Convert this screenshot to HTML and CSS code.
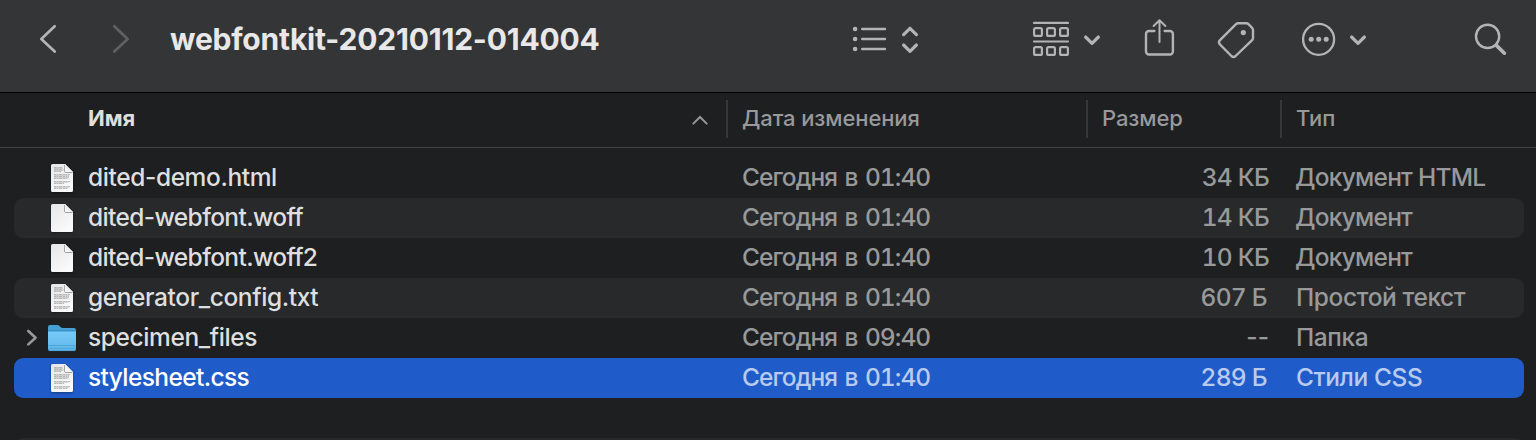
FILE: index.html
```html
<!DOCTYPE html>
<html lang="ru">
<head>
<meta charset="utf-8">
<title>webfontkit-20210112-014004</title>
<link rel="stylesheet" href="styles.css">
</head>
<body>
<svg class="defs" width="0" height="0" aria-hidden="true">
  <defs>
    <linearGradient id="paper" x1="0" y1="0" x2="0.6" y2="1"><stop offset="0" stop-color="#e6e6e6"/><stop offset="1" stop-color="#fafafa"/></linearGradient>
    <linearGradient id="fold" x1="0" y1="1" x2="0.7" y2="0.3"><stop offset="0" stop-color="#ffffff"/><stop offset="1" stop-color="#e8e8e8"/></linearGradient>
    <linearGradient id="folder" x1="0" y1="0" x2="0" y2="1"><stop offset="0" stop-color="#76cbf8"/><stop offset="1" stop-color="#5fb5e8"/></linearGradient>
    <symbol id="doc" viewBox="0 0 24 30">
      <path d="M2.500 1H15l8 8v18.500a1.500 1.500 0 0 1-1.500 1.500h-19A1.500 1.500 0 0 1 1 27.500v-25A1.500 1.500 0 0 1 2.500 1z" fill="url(#paper)"/>
      <path d="M14.600 2v6.200a1.300 1.300 0 0 0 1.300 1.300h6.500" fill="none" stroke="#8c8c8c" stroke-width="1" opacity=".8"/>
      <path d="M15 1l8 8h-6.800A1.200 1.200 0 0 1 15 7.800z" fill="url(#fold)"/>
    </symbol>
    <symbol id="lines" viewBox="0 0 24 30">
      <g stroke="#888" stroke-width="1" fill="none" opacity=".55" stroke-dasharray="2.600 .5 1.400 .4 3.200 .6">
        <path d="M4 4.500h9M4 6.500h9.500M4 8.500h7M4 11.500h16M4 13.500h15M4 15.500h14M4 18.500h16M4 20.500h10M4 23.500h16M4 25.500h14"/>
      </g>
      <g stroke="#999" stroke-width="1" fill="none" opacity=".38">
        <path d="M4 5.500h9M4 7.500h9M4 12.500h15M4 14.500h15M4 19.500h14M4 24.500h15"/>
      </g>
    </symbol>
  </defs>
</svg>

<header class="toolbar">
  <svg class="icon back" width="24" height="92" viewBox="36 0 24 92"><path d="M54.700 26.300L41.300 39l13.400 12.500"/></svg>
  <svg class="icon forward" width="24" height="92" viewBox="109 0 24 92"><path d="M114.300 26.300L127.700 39l-13.400 12.500"/></svg>
  <h1 class="title">webfontkit-20210112-014004</h1>
  <svg class="icon view" width="80" height="92" viewBox="845 0 80 92">
    <path d="M862.200 29h22.800M862.200 39h22.800M862.200 49h22.800" stroke-width="2.400"/>
    <g class="solid"><circle cx="855.100" cy="29" r="2.300"/><circle cx="855.100" cy="39" r="2.300"/><circle cx="855.100" cy="49" r="2.300"/></g>
    <path d="M903.600 34.600l6.400-6.300 6.400 6.300M903.600 45l6.400 6.300 6.400-6.300" stroke-width="3.200"/>
  </svg>
  <svg class="icon group" width="80" height="92" viewBox="1025 0 80 92">
    <path d="M1034 22.900h34M1034 41.500h34" stroke-width="2.200"/>
    <g stroke-width="2.200"><rect x="1034.100" y="28.100" width="7.800" height="7.800" rx="1.500"/><rect x="1047.100" y="28.100" width="7.800" height="7.800" rx="1.500"/><rect x="1060.100" y="28.100" width="7.800" height="7.800" rx="1.500"/><rect x="1034.100" y="47.100" width="7.800" height="7.800" rx="1.500"/><rect x="1047.100" y="47.100" width="7.800" height="7.800" rx="1.500"/><rect x="1060.100" y="47.100" width="7.800" height="7.800" rx="1.500"/></g>
    <path d="M1085.600 37l6.400 6.300 6.400-6.300" stroke-width="3.200"/>
  </svg>
  <svg class="icon share" width="40" height="92" viewBox="1140 0 40 92">
    <path d="M1154.300 31h-5.300a3 3 0 0 0-3 3v17.500a3 3 0 0 0 3 3h20.900a3 3 0 0 0 3-3V34a3 3 0 0 0-3-3h-5.200"/>
    <path d="M1159.500 42V20.300M1153.600 26l5.900-5.800 5.900 5.800" stroke-width="2"/>
  </svg>
  <svg class="icon tag" width="48" height="92" viewBox="1212 0 48 92">
    <path d="M1220 40.200L1236 24.200q1-.9 2.300-.9h8q1.300 0 2.200.9l3.600 3.600q.9.900.9 2.200v8q0 1.300-.9 2.200L1235.600 56q-2.100 1.900-4.200 0l-11.400-11.500q-2.100-2.200 0-4.300z"/>
    <circle class="solid" cx="1243.300" cy="32.600" r="2.600"/>
  </svg>
  <svg class="icon more" width="76" height="92" viewBox="1295 0 76 92">
    <circle cx="1318.600" cy="39.300" r="15.500" stroke-width="2.300"/>
    <g class="solid"><circle cx="1311.200" cy="39.300" r="2.500"/><circle cx="1318.700" cy="39.300" r="2.500"/><circle cx="1326.200" cy="39.300" r="2.500"/></g>
    <path d="M1351.600 37l6.400 6.300 6.400-6.300" stroke-width="3.200"/>
  </svg>
  <svg class="icon search" width="44" height="92" viewBox="1468 0 44 92">
    <circle cx="1487.600" cy="36.400" r="11.600"/>
    <path d="M1496.400 45.400l8 7.800" stroke-width="3.600"/>
  </svg>
</header>

<div class="columns">
  <div class="col col-name">Имя
    <svg class="sort" width="18" height="12" viewBox="0 0 18 12"><path d="M2.300 9.600L9 3l6.700 6.600"/></svg>
  </div>
  <div class="col">Дата изменения</div>
  <div class="col">Размер</div>
  <div class="col">Тип</div>
</div>

<main class="files">
  <div class="row">
    <svg class="file-icon" width="24" height="30"><use href="#doc"/><use href="#lines"/></svg>
    <span class="name">dited-demo.html</span><span class="date">Сегодня в 01:40</span><span class="size">34 КБ</span><span class="type">Документ HTML</span>
  </div>
  <div class="row">
    <svg class="file-icon" width="24" height="30"><use href="#doc"/></svg>
    <span class="name tight">dited-webfont.woff</span><span class="date">Сегодня в 01:40</span><span class="size">14 КБ</span><span class="type">Документ</span>
  </div>
  <div class="row">
    <svg class="file-icon" width="24" height="30"><use href="#doc"/></svg>
    <span class="name tight">dited-webfont.woff2</span><span class="date">Сегодня в 01:40</span><span class="size">10 КБ</span><span class="type">Документ</span>
  </div>
  <div class="row">
    <svg class="file-icon" width="24" height="30"><use href="#doc"/><use href="#lines"/></svg>
    <span class="name">generator_config.txt</span><span class="date">Сегодня в 01:40</span><span class="size bytes">607 Б</span><span class="type plain">Простой текст</span>
  </div>
  <div class="row">
    <svg class="folder-icon" width="54" height="40" viewBox="24 318 54 40">
      <path d="M28.300 331l7.300 6.700-7.300 6.700" fill="none" stroke="#98999a" stroke-width="2.600" stroke-linecap="round" stroke-linejoin="round"/>
      <path d="M48 327q0-2 2-2h7.500q1 0 1.700.7l1.600 1.500q.8.700 2 .7H74q2 0 2 2v8H48z" fill="#469fd3"/>
      <path d="M48 331.500h28V349q0 2-2 2H50q-2 0-2-2z" fill="url(#folder)"/>
      <path d="M48 330.700h28" stroke="#3788bb" stroke-width=".8"/>
      <path d="M48 345.500h28M48 348.300h28M49 350.600h26" stroke="#459ed2" stroke-width=".8"/>
    </svg>
    <span class="name">specimen_files</span><span class="date">Сегодня в 09:40</span><span class="size dash">--</span><span class="type plain">Папка</span>
  </div>
  <div class="row selected">
    <svg class="file-icon" width="24" height="30"><use href="#doc"/><use href="#lines"/></svg>
    <span class="name tight">stylesheet.css</span><span class="date">Сегодня в 01:40</span><span class="size bytes">289 Б</span><span class="type plain">Стили CSS</span>
  </div>
  <div class="row"></div>
  <div class="row"></div>
</main>
</body>
</html>
```
FILE: styles.css
```css
* { box-sizing: border-box; }
body {
  margin: 0;
  height: 440px;
  overflow: hidden;
  background: #1e1f21;
  color: #dedfdf;
  font-family: Inter, "Noto Sans", sans-serif;
}
.defs { display: block; height: 0; }
.toolbar {
  display: flex;
  height: 93px;
  padding-left: 36px;
  background: #343537;
  border-bottom: 1px solid #000;
}
.icon {
  flex: none;
  fill: none;
  stroke: #b3b4b5;
  stroke-width: 2.4;
  stroke-linecap: round;
  stroke-linejoin: round;
}
.icon .solid, .icon.tag .solid { fill: #b3b4b5; stroke: none; }
.icon.back, .icon.forward { stroke-width: 2.7; }
.icon.forward { margin-left: 49px; stroke: #606162; }
.title {
  width: 675px;
  margin: 0 0 0 37px;
  font-size: 30px;
  font-weight: 700;
  line-height: 78px;
  letter-spacing: -0.2px;
  white-space: nowrap;
  color: #e8e8e8;
}
.group { margin-left: 100px; }
.share { margin-left: 35px; }
.tag { margin-left: 32px; }
.more { margin-left: 35px; }
.search { margin-left: 97px; }

.columns {
  display: grid;
  grid-template-columns: 728px 360px 194px 1fr;
  height: 55px;
  padding-top: 7px;
  border-bottom: 1px solid #414244;
}
.col {
  height: 38px;
  padding-left: 14px;
  border-right: 2px solid #363739;
  font-size: 22px;
  font-weight: 500;
  line-height: 37px;
  letter-spacing: -0.1px;
  color: #98999a;
}
.col:last-child { border-right: 0; }
.col-name {
  display: flex;
  justify-content: space-between;
  padding: 0 17px 0 88px;
  font-weight: 700;
  color: #dedfdf;
}
.sort { margin-top: 14px; fill: none; stroke: #98999a; stroke-width: 2; stroke-linecap: round; }

.files { height: 292px; overflow: hidden; padding: 10px 12px 0 14px; }
.row {
  display: grid;
  grid-template-columns: 74px 654px 400px 127px 1fr;
  height: 40px;
  border-radius: 9px;
  font-size: 24.5px;
  font-weight: 500;
  line-height: 39px;
  letter-spacing: -0.75px;
  white-space: nowrap;
  color: #98999a;
}
.row:nth-child(even) { background: #28292b; }
.row.selected { background: #1f5bc9; color: #b8cbee; }
.file-icon { margin: 5px 0 0 36px; filter: drop-shadow(0 1px 1px rgba(0, 0, 0, .35)); }
.folder-icon { margin-left: 10px; }
.name { letter-spacing: -0.4px; color: #dedfdf; }
.tight { letter-spacing: -0.62px; }
.selected .name { color: #fff; }
.date, .size { font-variant-numeric: tabular-nums; }
.date { letter-spacing: -0.95px; word-spacing: 1.8px; }
.size { text-align: right; }
.bytes { padding-right: 2px; letter-spacing: -0.7px; }
.dash { font-variant-numeric: normal; letter-spacing: 0; }
.type { padding-left: 26px; letter-spacing: -0.75px; }
.plain { padding-left: 27px; letter-spacing: -0.4px; }
```
